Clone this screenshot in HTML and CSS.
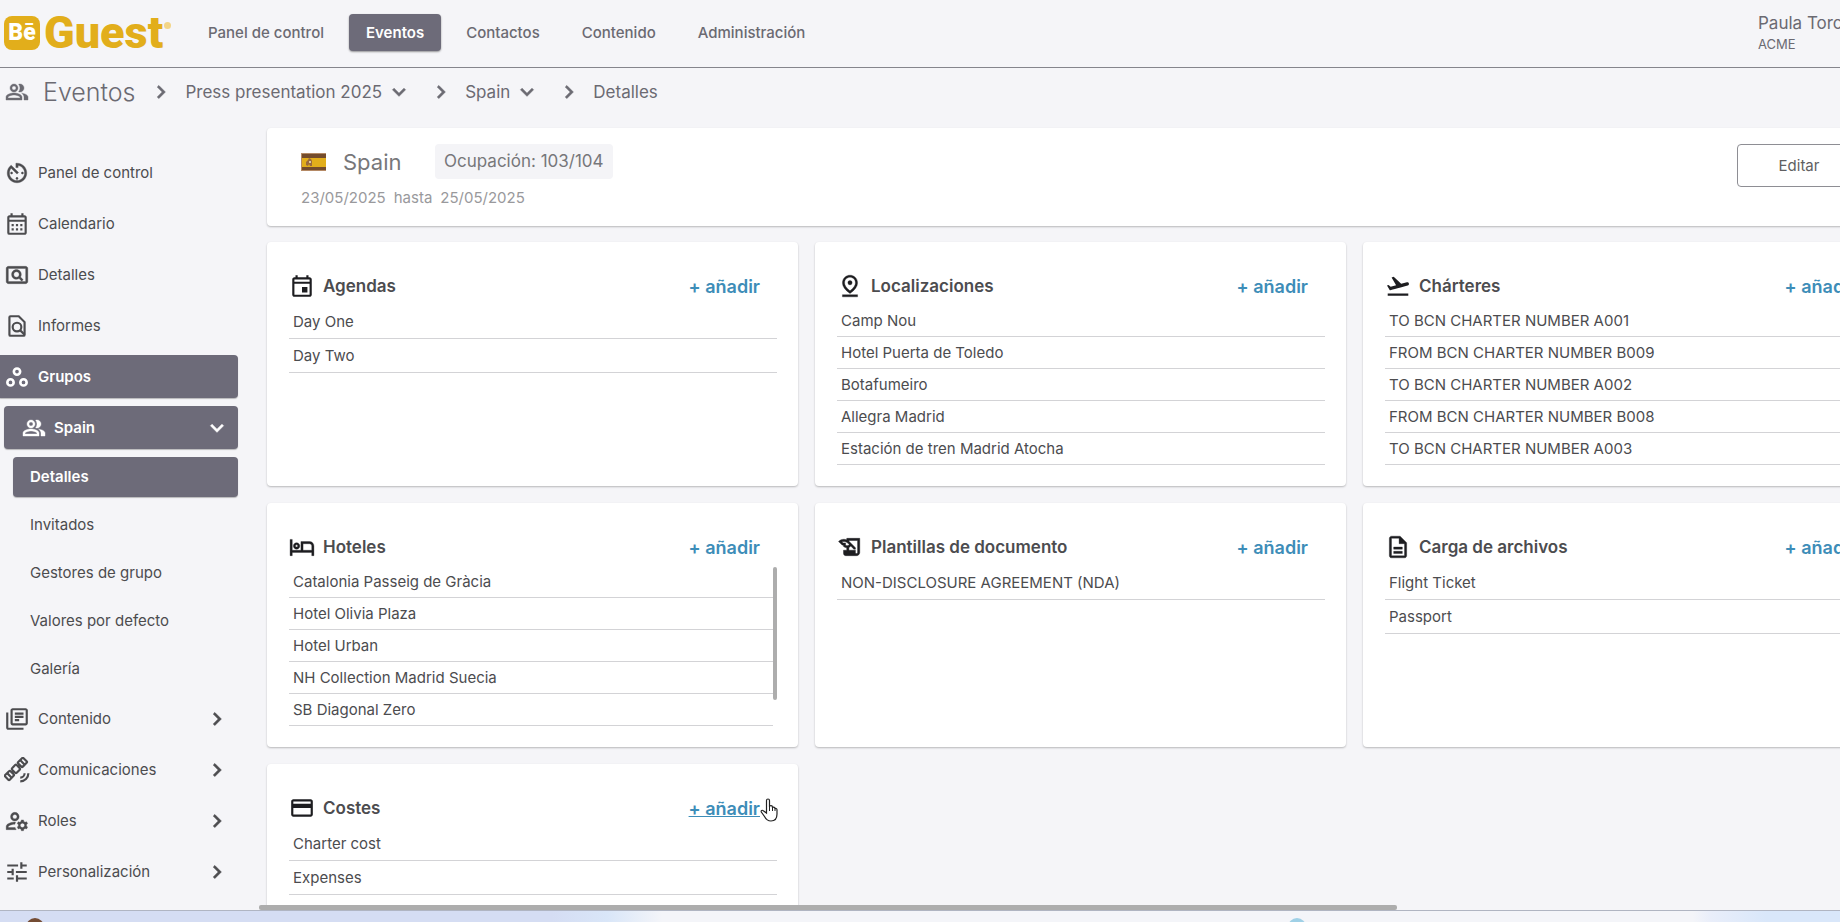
FILE: index.html
```html
<!DOCTYPE html>
<html lang="es">
<head>
    <meta charset="UTF-8">
    <meta name="viewport" content="width=device-width, initial-scale=1.0">
    <title>BeGuest - Spain</title>
    <link rel="stylesheet" href="styles.css">
</head>
<body>
    <!-- Iconos -->
    <svg class="sprite" aria-hidden="true">
        <symbol id="i-people" viewBox="0 0 24 24"><path d="M16.67 13.13C18.04 14.06 19 15.32 19 17v3h4v-3c0-2.18-3.57-3.47-6.33-3.87zM9 12c2.21 0 4-1.79 4-4s-1.79-4-4-4-4 1.79-4 4 1.79 4 4 4zm0-6c1.1 0 2 .9 2 2s-.9 2-2 2-2-.9-2-2 .9-2 2-2zM15 12c2.21 0 4-1.79 4-4s-1.79-4-4-4c-.47 0-.91.1-1.33.24C14.5 5.27 15 6.58 15 8s-.5 2.73-1.33 3.76c.42.14.86.24 1.33.24zM9 13c-2.67 0-8 1.34-8 4v3h16v-3c0-2.66-5.33-4-8-4zm6 5H3v-.99C3.2 16.29 6.3 15 9 15s5.8 1.29 6 2v1z" stroke="currentColor" stroke-width=".4"/></symbol>
        <symbol id="i-right" viewBox="0 0 24 24"><path d="M10 6 8.59 7.41 13.17 12l-4.58 4.59L10 18l6-6z" stroke="currentColor" stroke-width=".6"/></symbol>
        <symbol id="i-down" viewBox="0 0 24 24"><path d="M16.59 8.59 12 13.17 7.41 8.59 6 10l6 6 6-6z" stroke="currentColor" stroke-width=".6"/></symbol>
        <symbol id="i-timer" viewBox="0 0 24 24"><path d="M11 17c0 .55.45 1 1 1s1-.45 1-1-.45-1-1-1-1 .45-1 1zm0-14v4h2V5.08c3.39.49 6 3.39 6 6.92 0 3.87-3.13 7-7 7s-7-3.13-7-7c0-1.68.59-3.22 1.58-4.42L12 13l1.41-1.41-6.8-6.8v.02C4.42 6.45 3 9.05 3 12c0 4.97 4.02 9 9 9 4.97 0 9-4.03 9-9s-4.03-9-9-9h-1zm7 9c0-.55-.45-1-1-1s-1 .45-1 1 .45 1 1 1 1-.45 1-1zM6 12c0 .55.45 1 1 1s1-.45 1-1-.45-1-1-1-1 .45-1 1z" stroke="currentColor" stroke-width=".4"/></symbol>
        <symbol id="i-calendar" viewBox="0 0 24 24"><path d="M19 4h-1V2h-2v2H8V2H6v2H5c-1.11 0-1.99.9-1.99 2L3 20a2 2 0 0 0 2 2h14c1.1 0 2-.9 2-2V6c0-1.1-.9-2-2-2zm0 16H5V10h14v10zm0-12H5V6h14v2zM9 14H7v-2h2v2zm4 0h-2v-2h2v2zm4 0h-2v-2h2v2zm-8 4H7v-2h2v2zm4 0h-2v-2h2v2zm4 0h-2v-2h2v2z"/></symbol>
        <symbol id="i-pageview" viewBox="0 0 24 24"><path d="M11.49 16c.88 0 1.7-.26 2.39-.7l2.44 2.44 1.42-1.42-2.44-2.43c.44-.7.7-1.51.7-2.39C16 9.01 13.99 7 11.5 7S7 9.01 7 11.5 9.01 16 11.49 16zm.01-7c1.38 0 2.5 1.12 2.5 2.5S12.88 14 11.5 14 9 12.88 9 11.5 10.12 9 11.5 9zM20 4H4c-1.1 0-2 .9-2 2v12c0 1.1.9 2 2 2h16c1.1 0 2-.9 2-2V6c0-1.1-.9-2-2-2zm0 14H4V6h16v12z" stroke="currentColor" stroke-width=".3"/></symbol>
        <symbol id="i-report" viewBox="0 0 24 24"><g fill="none" stroke="currentColor" stroke-width="2"><path d="M18 21H6a1 1 0 0 1-1-1V4a1 1 0 0 1 1-1h7.6L19 8.4V20a1 1 0 0 1-1 1z"/><circle cx="12" cy="13" r="4"/><path d="M14.8 15.8 19 20"/></g></symbol>
        <symbol id="i-groups" viewBox="0 0 24 24"><g fill="none" stroke="currentColor" stroke-width="2.4"><circle cx="12" cy="7" r="2.9"/><circle cx="6" cy="17" r="2.9"/><circle cx="18" cy="17" r="2.9"/></g></symbol>
        <symbol id="i-library" viewBox="0 0 24 24"><path d="M4 6H2v14c0 1.1.9 2 2 2h14v-2H4V6zM20 2H8c-1.1 0-2 .9-2 2v12c0 1.1.9 2 2 2h12c1.1 0 2-.9 2-2V4c0-1.1-.9-2-2-2zm0 14H8V4h12v12zM10 9h8v2h-8zM10 12h4v2h-4zM10 6h8v2h-8z"/></symbol>
        <symbol id="i-satellite" viewBox="0 0 24 24"><g fill="none" stroke="currentColor" stroke-width="2"><g transform="rotate(-45 11 11)"><rect x="-1" y="8" width="7" height="6" rx="1"/><rect x="8" y="8" width="6" height="6" rx="1"/><rect x="16" y="8" width="7" height="6" rx="1"/><path d="M6 11h2M14 11h2M2.5 8v6M19.5 8v6"/></g><path d="M15 19a4 4 0 0 0 4-4M15 22.5a7.5 7.5 0 0 0 7.5-7.5"/></g></symbol>
        <symbol id="i-roles" viewBox="0 0 24 24"><path d="M4 18v-.65c0-.34.16-.66.41-.81C6.1 15.53 8.03 15 10 15c.03 0 .05 0 .08.01.1-.7.3-1.37.59-1.98-.22-.02-.44-.03-.67-.03-2.42 0-4.68.67-6.61 1.82-.88.52-1.39 1.5-1.39 2.53V20h9.26c-.42-.6-.75-1.28-.97-2H4zM10 12c2.21 0 4-1.79 4-4s-1.79-4-4-4-4 1.79-4 4 1.79 4 4 4zm0-6c1.1 0 2 .9 2 2s-.9 2-2 2-2-.9-2-2 .9-2 2-2zM20.75 16c0-.22-.03-.42-.06-.63l1.14-1.01-1-1.73-1.45.49c-.32-.27-.68-.48-1.08-.63L18 11h-2l-.3 1.49c-.4.15-.76.36-1.08.63l-1.45-.49-1 1.73 1.14 1.01c-.03.21-.06.41-.06.63s.03.42.06.63l-1.14 1.01 1 1.73 1.45-.49c.32.27.68.48 1.08.63L16 21h2l.3-1.49c.4-.15.76-.36 1.08-.63l1.45.49 1-1.73-1.14-1.01c.03-.21.06-.41.06-.63zM17 18c-1.1 0-2-.9-2-2s.9-2 2-2 2 .9 2 2-.9 2-2 2z" stroke="currentColor" stroke-width=".3"/></symbol>
        <symbol id="i-tune" viewBox="0 0 24 24"><path d="M3 17v2h6v-2H3zM3 5v2h10V5H3zm10 16v-2h8v-2h-8v-2h-2v6h2zM7 9v2H3v2h4v2h2V9H7zm14 4v-2H11v2h10zm-6-4h2V7h4V5h-4V3h-2v6z"/></symbol>
        <symbol id="i-event" viewBox="0 0 24 24"><path d="M19 4h-1V2h-2v2H8V2H6v2H5c-1.11 0-1.99.9-1.99 2L3 20c0 1.1.89 2 2 2h14c1.1 0 2-.9 2-2V6c0-1.1-.9-2-2-2zm0 16H5V10h14v10zm0-12H5V6h14v2zM12 13h5v5h-5z"/></symbol>
        <symbol id="i-pin" viewBox="0 0 24 24"><path d="M12 4c1.93 0 5 1.4 5 5.15 0 2.16-1.72 4.67-5 7.32-3.28-2.65-5-5.17-5-7.32C7 5.4 10.07 4 12 4m0-2C8.73 2 5 4.46 5 9.15c0 3.12 2.33 6.41 7 9.85 4.67-3.44 7-6.73 7-9.85C19 4.46 15.27 2 12 2zM12 7a2 2 0 1 0 0 4 2 2 0 0 0 0-4zM5 20h14v2H5z" stroke="currentColor" stroke-width=".3"/></symbol>
        <symbol id="i-flight" viewBox="0 0 24 24"><path d="M2.5 19h19v2h-19zM22.07 9.64c-.21-.8-1.04-1.28-1.84-1.06L14.92 10l-6.9-6.43-1.93.51 4.14 7.17-4.97 1.33-1.97-1.54-1.45.39 2.59 4.49s7.12-1.9 16.57-4.43c.81-.23 1.28-1.05 1.07-1.85z"/></symbol>
        <symbol id="i-hotel" viewBox="0 0 24 24"><path d="M7 14c1.66 0 3-1.34 3-3S8.66 8 7 8s-3 1.34-3 3 1.34 3 3 3zm0-4c.55 0 1 .45 1 1s-.45 1-1 1-1-.45-1-1 .45-1 1-1zm12-3h-8v8H3V5H1v15h2v-3h18v3h2v-9c0-2.21-1.79-4-4-4zm2 8h-8V9h6c1.1 0 2 .9 2 2v4z" stroke="currentColor" stroke-width=".3"/></symbol>
        <symbol id="i-edu" viewBox="0 0 24 24"><path d="M9 4v1.38c-.83-.33-1.72-.5-2.61-.5-1.79 0-3.58.68-4.95 2.05l3.33 3.33h1.11v1.11c.86.86 1.98 1.31 3.11 1.36V15H6v3c0 1.1.9 2 2 2h10c1.66 0 3-1.34 3-3V4H9zm-1.11 6.41V8.26H5.61L4.57 7.22a5.07 5.07 0 0 1 1.82-.34c1.34 0 2.59.52 3.54 1.46l1.41 1.41-.2.2a2.7 2.7 0 0 1-1.92.8c-.47 0-.93-.12-1.33-.34zM19 17c0 .55-.45 1-1 1s-1-.45-1-1v-2h-6v-2.59c.57-.23 1.1-.57 1.56-1.03l.2-.2L15.59 14H17v-1.41l-6-5.97V6h8v11z" stroke="currentColor" stroke-width=".4"/></symbol>
        <symbol id="i-file" viewBox="0 0 24 24"><path d="M8 16h8v2H8zM8 12h8v2H8zM14 2H6c-1.1 0-2 .9-2 2v16c0 1.1.89 2 1.99 2H18c1.1 0 2-.9 2-2V8l-6-6zm4 18H6V4h7v5h5v11z" stroke="currentColor" stroke-width=".3"/></symbol>
        <symbol id="i-credit" viewBox="0 0 24 24"><path d="M20 4H4c-1.11 0-1.99.89-1.99 2L2 18c0 1.11.89 2 2 2h16c1.11 0 2-.89 2-2V6c0-1.11-.89-2-2-2zm0 14H4v-6h16v6zm0-10H4V6h16v2z"/></symbol>
    </svg>

    <header class="topbar">
        <a class="logo" href="#">
            <span class="logo-badge">Bē</span>
            <span class="logo-name">Guest</span>
            <span class="logo-dot"></span>
        </a>
        <nav class="topnav">
            <a href="#">Panel de control</a>
            <a class="active" href="#">Eventos</a>
            <a href="#">Contactos</a>
            <a href="#">Contenido</a>
            <a href="#">Administración</a>
        </nav>
        <div class="user">
            <div class="user-name">Paula Torc</div>
            <div class="user-company">ACME</div>
        </div>
    </header>

    <nav class="breadcrumb">
        <svg class="icon-sm"><use href="#i-people"/></svg>
        <a class="crumb-home" href="#">Eventos</a>
        <svg class="icon crumb-sep"><use href="#i-right"/></svg>
        <button class="crumb" type="button">Press presentation 2025 <svg class="icon"><use href="#i-down"/></svg></button>
        <svg class="icon crumb-sep"><use href="#i-right"/></svg>
        <button class="crumb" type="button">Spain <svg class="icon"><use href="#i-down"/></svg></button>
        <svg class="icon crumb-sep"><use href="#i-right"/></svg>
        <span class="crumb">Detalles</span>
    </nav>

    <div class="layout">
        <nav class="sidebar">
            <a class="side-item" href="#"><svg class="icon"><use href="#i-timer"/></svg>Panel de control</a>
            <a class="side-item" href="#"><svg class="icon"><use href="#i-calendar"/></svg>Calendario</a>
            <a class="side-item" href="#"><svg class="icon"><use href="#i-pageview"/></svg>Detalles</a>
            <a class="side-item" href="#"><svg class="icon"><use href="#i-report"/></svg>Informes</a>
            <a class="side-item active" href="#"><svg class="icon"><use href="#i-groups"/></svg>Grupos</a>
            <a class="side-item side-group active" href="#"><svg class="icon-sm"><use href="#i-people"/></svg>Spain<svg class="icon arrow"><use href="#i-down"/></svg></a>
            <a class="side-sub active" href="#">Detalles</a>
            <a class="side-sub" href="#">Invitados</a>
            <a class="side-sub" href="#">Gestores de grupo</a>
            <a class="side-sub" href="#">Valores por defecto</a>
            <a class="side-sub" href="#">Galería</a>
            <a class="side-item" href="#"><svg class="icon"><use href="#i-library"/></svg>Contenido<svg class="icon arrow"><use href="#i-right"/></svg></a>
            <a class="side-item" href="#"><svg class="icon"><use href="#i-satellite"/></svg>Comunicaciones<svg class="icon arrow"><use href="#i-right"/></svg></a>
            <a class="side-item" href="#"><svg class="icon"><use href="#i-roles"/></svg>Roles<svg class="icon arrow"><use href="#i-right"/></svg></a>
            <a class="side-item" href="#"><svg class="icon"><use href="#i-tune"/></svg>Personalización<svg class="icon arrow"><use href="#i-right"/></svg></a>
        </nav>

        <main class="content">
            <div class="board">
                <section class="card summary">
                    <div class="summary-info">
                        <div class="summary-title">
                            <svg class="flag" viewBox="0 0 25 18">
                                <rect width="25" height="18" fill="#744c2c"/>
                                <rect y="5" width="25" height="9" fill="#e2ae1b"/>
                                <path d="M0 .5h25M0 17.5h25M.5 0v18" stroke="#b58a66"/>
                                <path d="M5 12V9l2-2 1-2 2 1 1 2v5H9l-1-2-1 2z" fill="#9c6a3c"/>
                                <path d="M8 8h2v2H8z" fill="#dcc9a5"/>
                            </svg>
                            <h1>Spain</h1>
                            <span class="badge">Ocupación: 103/104</span>
                        </div>
                        <div class="dates"><span>23/05/2025</span><span>hasta</span><span>25/05/2025</span></div>
                    </div>
                    <button class="edit" type="button">Editar</button>
                </section>

                <div class="cards">
                    <section class="card">
                        <div class="card-head">
                            <svg class="icon"><use href="#i-event"/></svg>
                            <h2>Agendas</h2>
                            <a class="add" href="#">+ añadir</a>
                        </div>
                        <ul class="list">
                            <li>Day One</li>
                            <li>Day Two</li>
                        </ul>
                    </section>

                    <section class="card">
                        <div class="card-head">
                            <svg class="icon"><use href="#i-pin"/></svg>
                            <h2>Localizaciones</h2>
                            <a class="add" href="#">+ añadir</a>
                        </div>
                        <ul class="list dense">
                            <li>Camp Nou</li>
                            <li>Hotel Puerta de Toledo</li>
                            <li>Botafumeiro</li>
                            <li>Allegra Madrid</li>
                            <li>Estación de tren Madrid Atocha</li>
                        </ul>
                    </section>

                    <section class="card">
                        <div class="card-head">
                            <svg class="icon"><use href="#i-flight"/></svg>
                            <h2>Chárteres</h2>
                            <a class="add" href="#">+ añadir</a>
                        </div>
                        <ul class="list dense">
                            <li>TO BCN CHARTER NUMBER A001</li>
                            <li>FROM BCN CHARTER NUMBER B009</li>
                            <li>TO BCN CHARTER NUMBER A002</li>
                            <li>FROM BCN CHARTER NUMBER B008</li>
                            <li>TO BCN CHARTER NUMBER A003</li>
                        </ul>
                    </section>

                    <section class="card">
                        <div class="card-head">
                            <svg class="icon"><use href="#i-hotel"/></svg>
                            <h2>Hoteles</h2>
                            <a class="add" href="#">+ añadir</a>
                        </div>
                        <ul class="list dense scrolled">
                            <li>Catalonia Passeig de Gràcia</li>
                            <li>Hotel Olivia Plaza</li>
                            <li>Hotel Urban</li>
                            <li>NH Collection Madrid Suecia</li>
                            <li>SB Diagonal Zero</li>
                        </ul>
                    </section>

                    <section class="card">
                        <div class="card-head">
                            <svg class="icon"><use href="#i-edu"/></svg>
                            <h2>Plantillas de documento</h2>
                            <a class="add" href="#">+ añadir</a>
                        </div>
                        <ul class="list">
                            <li>NON-DISCLOSURE AGREEMENT (NDA)</li>
                        </ul>
                    </section>

                    <section class="card">
                        <div class="card-head">
                            <svg class="icon"><use href="#i-file"/></svg>
                            <h2>Carga de archivos</h2>
                            <a class="add" href="#">+ añadir</a>
                        </div>
                        <ul class="list">
                            <li>Flight Ticket</li>
                            <li>Passport</li>
                        </ul>
                    </section>

                    <section class="card">
                        <div class="card-head">
                            <svg class="icon"><use href="#i-credit"/></svg>
                            <h2>Costes</h2>
                            <a class="add hover" href="#">+ añadir
                                <svg class="pointer" viewBox="0 0 18 24"><path d="M6.5 15V2.5a1.5 1.5 0 0 1 3 0V9c0-2 3-1.8 3 .2V10c.3-1.5 2.5-1.2 2.5.5v.5c.5-1 2-.6 2 .8V16c0 4-2 7-6 7-3.5 0-5-1.5-6.5-4.5L1.3 14c-.6-1.5 1-2.3 2-1.2z" fill="#fff" stroke="#222" stroke-width="1.2"/><path d="M9.5 8v5M12.5 9v4M15 10.5V13" stroke="#222"/></svg>
                            </a>
                        </div>
                        <ul class="list">
                            <li>Charter cost</li>
                            <li>Expenses</li>
                        </ul>
                    </section>
                </div>
            </div>
            <div class="hscroll"></div>
        </main>
    </div>

    <footer class="bottom-edge">
        <span class="dot-brown"></span>
        <span class="dot-blue"></span>
    </footer>
</body>
</html>
```
FILE: styles.css
```css
* {
    box-sizing: border-box;
}
body {
    display: flex;
    flex-direction: column;
    height: 100vh;
    margin: 0;
    overflow: hidden;
    background-color: #f5f5f8;
    color: #4c4c4f;
    font-family: Inter, "Open Sans", sans-serif;
    font-size: 15px;
}
a {
    color: inherit;
    text-decoration: none;
}
button {
    font-family: inherit;
    color: inherit;
    cursor: pointer;
}
.sprite {
    position: absolute;
    width: 0;
    height: 0;
}
.icon {
    flex: none;
    width: 26px;
    height: 26px;
    fill: currentColor;
}
.icon-sm {
    flex: none;
    width: 24px;
    height: 24px;
    fill: currentColor;
}

/* Barra superior */
.topbar {
    display: flex;
    flex: none;
    align-items: center;
    height: 68px;
    padding: 0 0 2px 4px;
    border-bottom: 1px solid #85858c;
    color: #6b6a72;
}
.logo {
    display: flex;
    align-items: center;
    gap: 4px;
    width: 187px;
    color: #e2ae1b;
    font-family: Roboto, sans-serif;
    font-weight: 900;
}
.logo-badge {
    width: 36px;
    height: 34px;
    border-radius: 8px;
    background-color: #e2ae1b;
    color: #fff;
    font-size: 23px;
    line-height: 34px;
    text-align: center;
}
.logo-name {
    font-size: 45px;
    line-height: 50px;
}
.logo-dot {
    width: 7px;
    height: 7px;
    margin: 0 0 14px -3px;
    border-radius: 50%;
    background-color: #f3d588;
}
.topnav {
    display: flex;
    gap: 8px;
    font-weight: 500;
}
.topnav a {
    padding: 0 17px;
    border-radius: 4px;
    line-height: 37px;
}
.topnav .active {
    background-color: #6d6b79;
    box-shadow: 0 1px 2px rgba(0, 0, 0, 0.4);
    color: #fff;
    font-weight: 600;
}
.user {
    width: 82px;
    margin-left: auto;
    overflow: hidden;
    white-space: nowrap;
}
.user-name {
    font-size: 17px;
    line-height: 22px;
}
.user-company {
    font-size: 13px;
    line-height: 20px;
}

/* Migas de pan */
.breadcrumb {
    display: flex;
    flex: none;
    align-items: center;
    height: 48px;
    padding-left: 5px;
    color: #6b6a72;
}
.crumb-home {
    margin-left: 14px;
    font-size: 25px;
    font-weight: 300;
}
.crumb-sep {
    margin: 0 11px 0 13px;
}
.crumb {
    display: flex;
    align-items: center;
    padding: 0;
    border: none;
    background: none;
    font-size: 17px;
}
.crumb .icon {
    margin: 0 3px 0 4px;
}

.layout {
    display: flex;
    flex: 1;
    min-height: 0;
}

/* Menú lateral */
.sidebar {
    display: flex;
    flex: none;
    flex-direction: column;
    gap: 8px;
    width: 238px;
    padding-top: 35px;
}
.side-item {
    display: flex;
    flex: none;
    align-items: center;
    gap: 8px;
    height: 43px;
    padding: 0 8px 0 4px;
    border-radius: 0 4px 4px 0;
}
.side-group {
    margin-left: 4px;
    padding-left: 18px;
    border-radius: 4px;
}
.side-sub {
    flex: none;
    height: 40px;
    margin-left: 13px;
    padding-left: 17px;
    border-radius: 4px;
    line-height: 40px;
}
.arrow {
    margin-left: auto;
}
.sidebar .active {
    background-color: #6d6b79;
    box-shadow: 0 1px 1px rgba(0, 0, 0, 0.25);
    color: #fff;
    font-weight: 600;
}

/* Contenido */
.content {
    position: relative;
    flex: 1;
    min-width: 0;
    margin-left: 21px;
    padding: 12px 0 0 8px;
    overflow: hidden;
}
.board {
    width: max-content;
}
.card {
    border-radius: 4px;
    background-color: #fff;
    box-shadow: 0 1px 2px rgba(0, 0, 0, 0.25);
}
.summary {
    display: flex;
    justify-content: space-between;
    align-items: flex-start;
    margin-bottom: 16px;
    padding: 16px 33px 18px 34px;
}
.summary-title {
    display: flex;
    align-items: center;
    color: #77777a;
}
.summary-title h1 {
    width: 92px;
    margin: 0 0 0 17px;
    font-size: 22px;
    font-weight: 400;
}
.flag {
    width: 25px;
    height: 18px;
}
.badge {
    padding: 0 9px;
    border-radius: 4px;
    background-color: #f4f4f7;
    font-size: 17px;
    line-height: 35px;
}
.dates {
    display: flex;
    gap: 8px;
    margin-top: 9px;
    color: #99999c;
    line-height: 20px;
}
.edit {
    width: 124px;
    height: 43px;
    border: 1px solid #8e8e94;
    border-radius: 4px;
    background-color: #fff;
    color: #5f5f62;
    font-size: 15px;
}
.cards {
    display: grid;
    grid-template-columns: repeat(3, 531px);
    grid-auto-rows: 244px;
    gap: 17px;
}
.cards .card {
    padding: 30px 21px 0 22px;
}
.card-head {
    display: flex;
    align-items: center;
    gap: 8px;
    height: 28px;
    padding-right: 17px;
    color: #1d1d20;
}
.card-head h2 {
    margin: 0;
    color: #4c4c4f;
    font-size: 17px;
    font-weight: 600;
}
.add {
    position: relative;
    margin-left: auto;
    color: #3d8db8;
    font-size: 18px;
    font-weight: 600;
}
.add:hover,
.add.hover {
    text-decoration: underline;
}
.pointer {
    position: absolute;
    top: 0;
    left: 100%;
    width: 18px;
    height: 24px;
}
.list {
    position: relative;
    margin: 5px 0 0;
    padding: 0;
    list-style: none;
}
.list li {
    height: 34px;
    padding-left: 4px;
    border-bottom: 1px solid #d3d3d6;
    line-height: 34px;
}
.list.dense li {
    height: 32px;
    line-height: 32px;
}
.scrolled {
    padding-right: 4px;
}
.scrolled::after {
    content: "";
    position: absolute;
    top: 1px;
    right: 0;
    width: 4px;
    height: 133px;
    border-radius: 2px;
    background-color: #adadad;
}
.hscroll {
    position: absolute;
    bottom: 0;
    left: 0;
    width: 72%;
    height: 5px;
    border-radius: 2px;
    background-color: #adadad;
}

/* Borde inferior */
.bottom-edge {
    position: relative;
    flex: none;
    height: 12px;
    overflow: hidden;
    border-top: 1px solid #b0b5c2;
    background: linear-gradient(90deg, #d5ddf3 0 30%, #d9e6f8 33%, #f4f5f9 36% 92%, #e9eefa 93%, #d9e7fa 96%);
}
.dot-brown,
.dot-blue {
    position: absolute;
    top: 7px;
    width: 18px;
    height: 18px;
    border-radius: 50%;
}
.dot-brown {
    left: 26px;
    background-color: #744c34;
}
.dot-blue {
    left: 70%;
    background-color: #9fd0e6;
}
```
